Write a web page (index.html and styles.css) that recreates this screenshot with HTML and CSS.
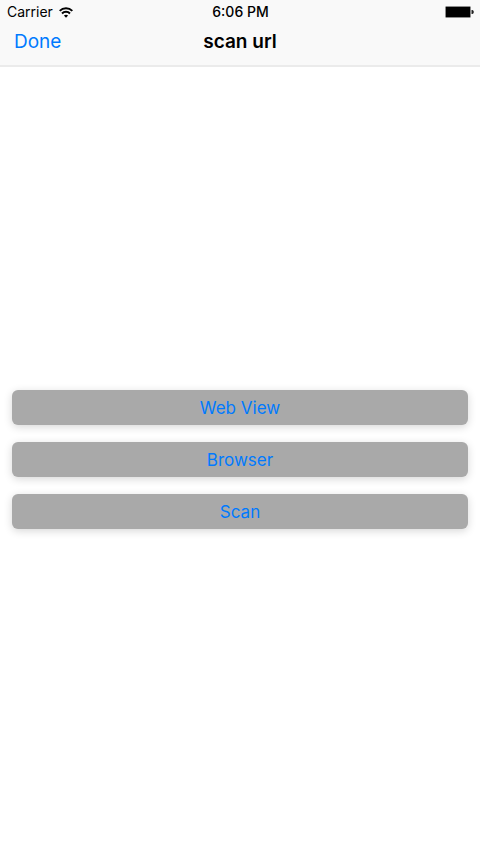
FILE: index.html
```html
<!DOCTYPE html>
<html lang="en">
<head>
  <meta charset="utf-8">
  <meta name="viewport" content="width=device-width, initial-scale=1">
  <title>scan url</title>
  <link rel="stylesheet" href="styles.css">
</head>
<body>
  <header class="top">
    <div class="status">
      <div class="carrier">
        <span>Carrier</span>
        <svg class="wifi" width="14" height="11" viewBox="0 0 14 11" fill="none" stroke="#000" stroke-width="2" aria-hidden="true">
          <path d="M0.7 3.9a9 9 0 0 1 12.6 0"/>
          <path d="M3 6.5a5.6 5.6 0 0 1 8 0"/>
          <path d="M7 10.7L4.9 8.6a3.1 3.1 0 0 1 4.2 0z" fill="#000" stroke="none"/>
        </svg>
      </div>
      <time class="clock">6:06 PM</time>
      <svg class="battery" width="29" height="12" viewBox="0 0 29 12" aria-hidden="true">
        <rect x="0.5" y="0.5" width="25" height="11" rx="1" fill="#000" stroke="#8c8c8c"/>
        <path d="M26.5 4h1q1.300 0.300 1.300 2t-1.300 2h-1z" fill="#222"/>
      </svg>
    </div>
    <nav class="bar">
      <a class="done" href="#">Done</a>
      <h1 class="title">scan url</h1>
    </nav>
  </header>
  <main class="actions">
    <button class="action" type="button">Web View</button>
    <button class="action" type="button">Browser</button>
    <button class="action" type="button">Scan</button>
  </main>
</body>
</html>
```
FILE: styles.css
```css
* {
  box-sizing: border-box;
}

body {
  margin: 0;
  min-height: 100vh;
  display: flex;
  flex-direction: column;
  background: #fff;
  color: #000;
  font-family: Inter, "Liberation Sans", sans-serif;
}

.top {
  background: #f9f9f9;
  border-bottom: 2px solid #ebebeb;
}

.status,
.bar {
  display: grid;
  grid-template-columns: 1fr auto 1fr;
  align-items: center;
}

.status {
  height: 24px;
  padding: 0 6px 0 7px;
  font-size: 14px;
  line-height: 16px;
}

.carrier {
  display: flex;
  align-items: center;
  gap: 6px;
}

.clock {
  font-weight: 500;
}

.battery {
  justify-self: end;
}

.bar {
  height: 41px;
  padding: 0 14px 6px;
  font-size: 19px;
}

.done {
  justify-self: start;
  color: #007aff;
  text-decoration: none;
}

.title {
  margin: 0;
  font-size: 19px;
  font-weight: 600;
}

.actions {
  flex: 1;
  display: flex;
  flex-direction: column;
  justify-content: center;
  gap: 17px;
  padding: 0 12px 2px;
}

.action {
  height: 35px;
  padding: 1px 0 0;
  border: 0;
  border-radius: 6px;
  background: #a9a9a9;
  box-shadow: 0 2px 8px rgba(0, 0, 0, 0.16);
  color: #007aff;
  font-family: inherit;
  font-size: 17px;
}
```
